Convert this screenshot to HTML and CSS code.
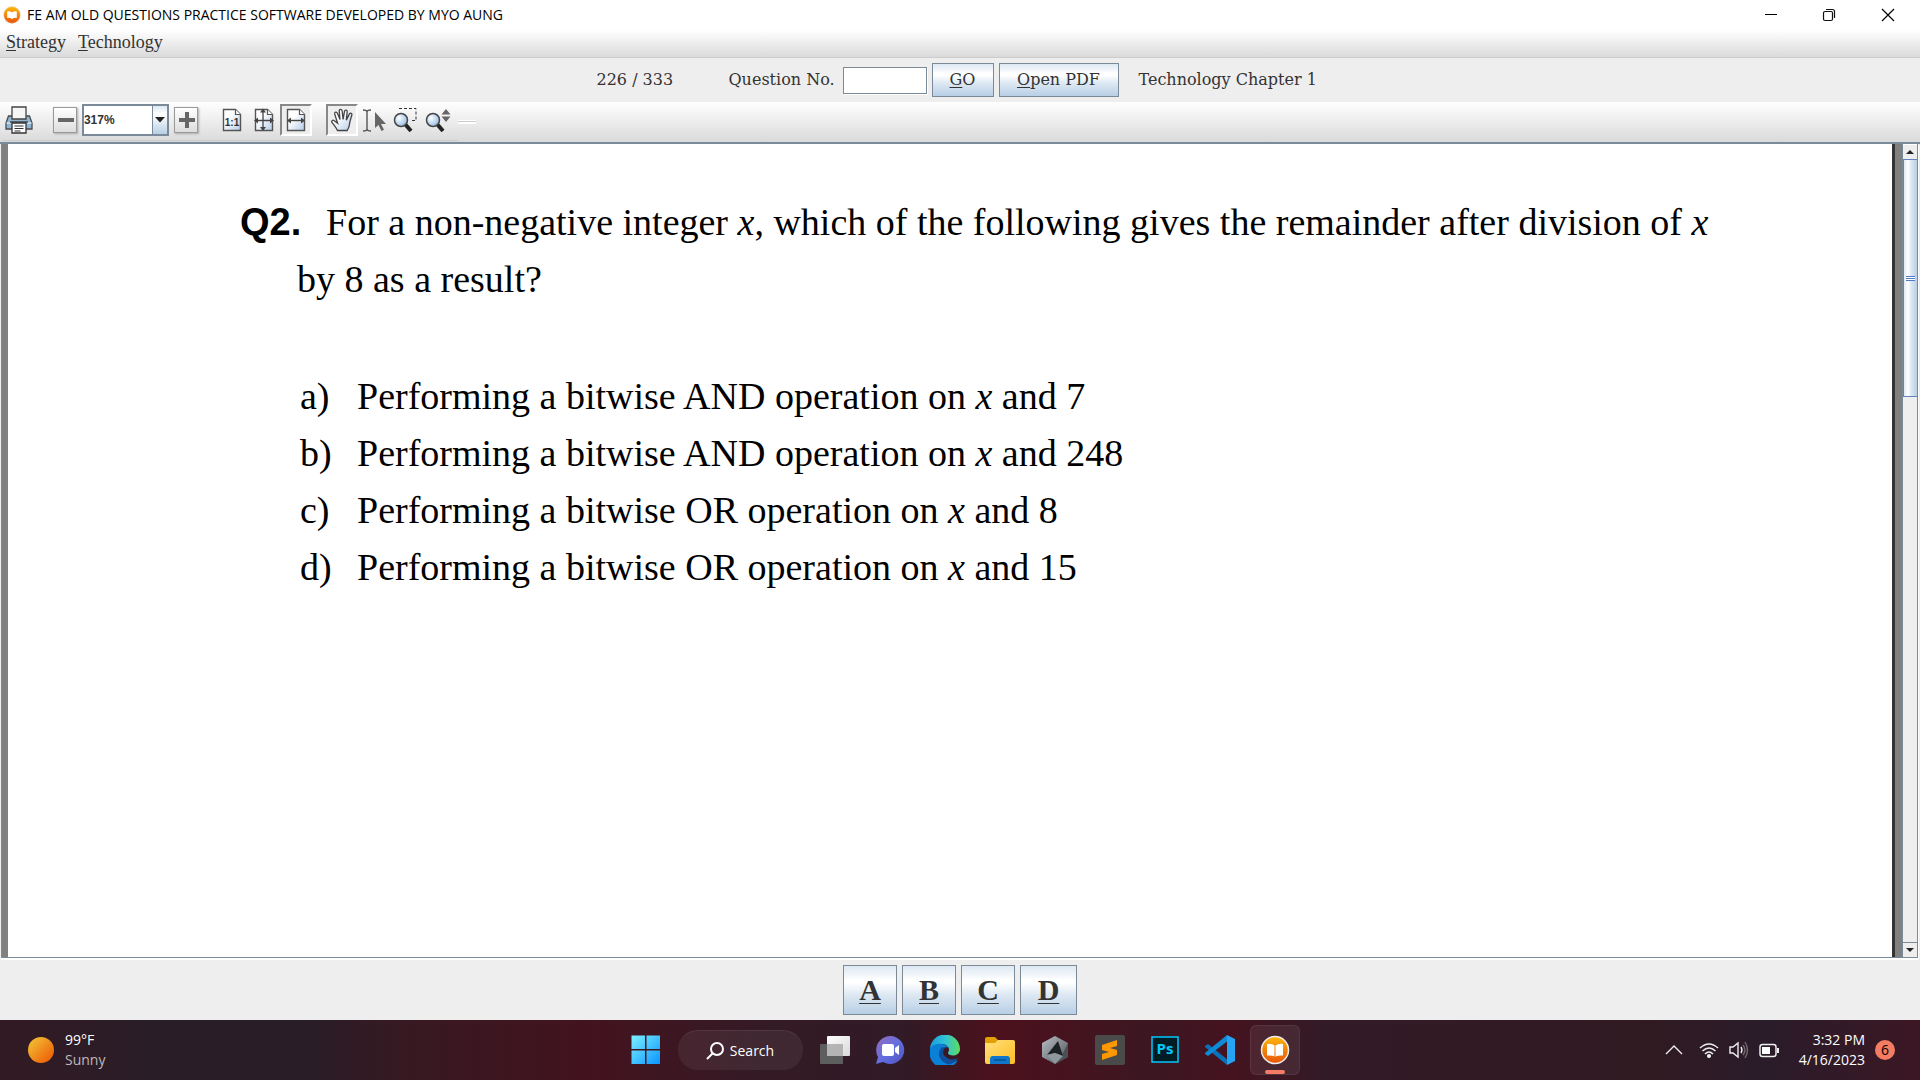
FILE: index.html
```html
<!DOCTYPE html>
<html lang="en">
<head>
<meta charset="utf-8">
<title>FE AM OLD QUESTIONS PRACTICE SOFTWARE DEVELOPED BY MYO AUNG</title>
<link rel="stylesheet" href="styles.css">
</head>
<body>
<svg class="defs" aria-hidden="true">
  <defs>
    <linearGradient id="paper" x1="0" y1="0" x2="1" y2="1"><stop offset=".35" stop-color="#fff"/><stop offset="1" stop-color="#b4cbe8"/></linearGradient>
    <radialGradient id="lens" cx=".35" cy=".35" r=".75"><stop offset="0" stop-color="#fff"/><stop offset="1" stop-color="#8db8e4"/></radialGradient>
    <linearGradient id="orange" x1="0" y1="0" x2="0" y2="1"><stop offset="0" stop-color="#ffb70a"/><stop offset="1" stop-color="#e85306"/></linearGradient>
    <linearGradient id="win" x1="0" y1="0" x2="1" y2="1"><stop offset="0" stop-color="#7cf0ff"/><stop offset="1" stop-color="#0a95ff"/></linearGradient>
    <linearGradient id="sun" x1="0" y1="0" x2="1" y2="1"><stop offset=".1" stop-color="#f2be34"/><stop offset=".8" stop-color="#ee6a0c"/></linearGradient>
    <linearGradient id="chat" x1="0" y1="0" x2="1" y2="1"><stop offset="0" stop-color="#9a68b8"/><stop offset=".5" stop-color="#6470e0"/><stop offset="1" stop-color="#5050c0"/></linearGradient>
    <linearGradient id="edge1" x1="0" y1=".5" x2="1" y2=".5"><stop offset="0" stop-color="#1c9bdc"/><stop offset=".5" stop-color="#2fc3d8"/><stop offset="1" stop-color="#5fdc5c"/></linearGradient>
    <linearGradient id="folder" x1="0" y1="0" x2="1" y2="1"><stop offset="0" stop-color="#ffe07a"/><stop offset="1" stop-color="#ffbd25"/></linearGradient>
    <linearGradient id="cube" x1="0" y1="0" x2="1" y2="1"><stop offset="0" stop-color="#b9c0c6"/><stop offset="1" stop-color="#4b5157"/></linearGradient>
    <linearGradient id="gray" x1="0" y1="0" x2="1" y2="1"><stop offset="0" stop-color="#fff"/><stop offset="1" stop-color="#d8d8d8"/></linearGradient>
  </defs>
</svg>

<div class="app">
  <header class="titlebar">
    <svg class="app-icon" viewBox="0 0 30 30" aria-hidden="true"><circle cx="15" cy="15" r="14" fill="url(#orange)" stroke="#e8e2dd"/><path d="M7 9q4-1 8 1.500Q19 8 23 9V20q-4-1-8 1.500Q11 19 7 20z" fill="#fff"/></svg>
    <h1 class="title">FE AM OLD QUESTIONS PRACTICE SOFTWARE DEVELOPED BY MYO AUNG</h1>
    <div class="window-controls">
      <button class="win-btn" aria-label="Minimize"><svg width="14" height="14" viewBox="0 0 14 14"><path d="M1 6.500h12" stroke="#000"/></svg></button>
      <button class="win-btn" aria-label="Restore"><svg width="14" height="14" viewBox="0 0 14 14" fill="none" stroke="#111" stroke-width="1.200"><rect x="1.500" y="3.500" width="9" height="9" rx="1.500"/><path d="M4 1.500h6.500q2 0 2 2V10"/></svg></button>
      <button class="win-btn" aria-label="Close"><svg width="14" height="14" viewBox="0 0 14 14"><path d="M1 1l12 12M13 1L1 13" stroke="#000" stroke-width="1.200"/></svg></button>
    </div>
  </header>

  <nav class="menubar">
    <a href="#strategy"><u>S</u>trategy</a>
    <a href="#technology"><u>T</u>echnology</a>
  </nav>

  <section class="question-bar">
    <span class="counter">226 / 333</span>
    <label for="qno">Question No.</label>
    <input id="qno" class="qno" type="text">
    <button class="metal-btn go"><u>G</u>O</button>
    <button class="metal-btn open-pdf"><u>O</u>pen PDF</button>
    <span class="chapter">Technology Chapter 1</span>
  </section>

  <div class="toolbar">
    <div class="tools">
      <button class="tool print" aria-label="Print"><svg width="30" height="30" viewBox="0 0 30 30"><path d="M4.500 11h21l2.500 7v6H2v-6z" fill="#8fb5d2" stroke="#474b50" stroke-width="1.300"/><path d="M8 2h14v12H8z" fill="#f6f6f6" stroke="#444" stroke-width="1.300"/><path d="M2.500 18h25" stroke="#d5e5f1" stroke-width="1.500"/><path d="M6 17h18" stroke="#444" stroke-width="1.500"/><path d="M8 18h14v10H8z" fill="#fff" stroke="#333" stroke-width="1.300"/><path d="M10.500 21h9M10.500 23.500h9M10.500 26h6" stroke="#333"/></svg></button>
      <button class="zoom-btn zoom-out" aria-label="Zoom out"><svg width="24" height="24" viewBox="0 0 24 24"><path d="M4 12h16" stroke="#666" stroke-width="4"/></svg></button>
      <div class="combo">
        <input class="combo-text" type="text" value="317%" aria-label="Zoom level">
        <button class="combo-arrow" aria-label="Choose zoom"><svg width="12" height="6" viewBox="0 0 12 6"><path d="M1 0h10L6 5.500z" fill="#222"/></svg></button>
      </div>
      <button class="zoom-btn" aria-label="Zoom in"><svg width="24" height="24" viewBox="0 0 24 24"><path d="M4 12h16M12 4v16" stroke="#666" stroke-width="4"/></svg></button>
      <div class="group">
        <button class="tool" aria-label="Actual size"><svg width="28" height="28" viewBox="0 0 28 28"><path d="M5.500 3.500h12l5 5v16h-17z" fill="url(#paper)" stroke="#555" stroke-width="1.400"/><path d="M17.500 3.500v5h5" fill="#fff" stroke="#555" stroke-width="1.200"/><text x="14" y="20" class="ratio">1:1</text></svg></button>
        <button class="tool" aria-label="Fit page"><svg width="28" height="28" viewBox="0 0 28 28"><path d="M5.500 3.500h12l5 5v16h-17z" fill="url(#paper)" stroke="#555" stroke-width="1.400"/><path d="M17.500 3.500v5h5" fill="#fff" stroke="#555" stroke-width="1.200"/><path d="M6 14.500h16M13 5v18" stroke="#444" stroke-width="1.300"/><path d="M4 14.500l4-3v6zM24 14.500l-4-3v6zM13 2.500l-3 4h6zM13 25l-3-4h6z" fill="#444"/></svg></button>
        <button class="tool pressed" aria-label="Fit width"><svg width="28" height="28" viewBox="0 0 28 28"><path d="M5.500 3.500h12l5 5v16h-17z" fill="url(#paper)" stroke="#555" stroke-width="1.400"/><path d="M17.500 3.500v5h5" fill="#fff" stroke="#555" stroke-width="1.200"/><path d="M8 14.500h12" stroke="#444" stroke-width="1.400"/><path d="M5 14.500l4-3v6zM23 14.500l-4-3v6z" fill="#444"/></svg></button>
      </div>
      <div class="group">
        <button class="tool pressed" aria-label="Pan"><svg width="28" height="28" viewBox="0 0 28 28"><path d="M9.500 24.500C8 21 5 18 3.800 16.200c-.8-1.500 1-2.700 2.500-1.500l3.300 2.600L6.700 8c-.5-2 2-2.600 2.700-.8l2.600 6.300-.8-8.700c0-2 2.700-2 2.900 0l1 8.500 1.400-8c.5-1.900 3-1.400 2.700.5l-.9 8.300 3-6c1-1.700 3.200-.7 2.500 1.100-1 3.300-2 5.500-2.300 9-.2 2.800-1.300 4.500-2.300 6.300z" fill="url(#paper)" stroke="#444" stroke-width="1.300"/></svg></button>
        <button class="tool" aria-label="Select text"><svg width="28" height="28" viewBox="0 0 28 28"><path d="M3 4q4 0 4 2 0-2 4-2M7 6v17M3 25q4 0 4-2 0 2 4 2" fill="none" stroke="#555" stroke-width="1.400"/><path d="M15 6v16l3.500-3 3 6 2.500-1.300-3-5.700h5z" fill="#666"/></svg></button>
        <button class="tool" aria-label="Zoom to selection"><svg width="28" height="28" viewBox="0 0 28 28"><path d="M7 2.500h17v12h-6" fill="none" stroke="#333" stroke-dasharray="3 2"/><path d="M13 18l6 7" stroke="#222" stroke-width="4"/><circle cx="9" cy="14" r="6.500" fill="url(#lens)" stroke="#444" stroke-width="1.500"/></svg></button>
        <button class="tool" aria-label="Dynamic zoom"><svg width="28" height="28" viewBox="0 0 28 28"><path d="M13 18l6 7" stroke="#222" stroke-width="4"/><circle cx="9" cy="14" r="6.500" fill="url(#lens)" stroke="#444" stroke-width="1.500"/><path d="M17.500 8.500L22 3l4.500 5.500zM17.500 10.500h9L22 16z" fill="#666"/></svg></button>
      </div>
    </div>
    <div class="handle"></div>
  </div>

  <main class="viewer">
    <article class="page">
      <p class="question"><b class="qnum">Q2.</b>For a non-negative integer <i>x</i>, which of the following gives the remainder after division of <i>x</i><br>by 8 as a result?</p>
      <ol class="choices">
        <li><span>a)</span>Performing a bitwise AND operation on <i>x</i> and 7</li>
        <li><span>b)</span>Performing a bitwise AND operation on <i>x</i> and 248</li>
        <li><span>c)</span>Performing a bitwise OR operation on <i>x</i> and 8</li>
        <li><span>d)</span>Performing a bitwise OR operation on <i>x</i> and 15</li>
      </ol>
    </article>
    <div class="scrollbar">
      <button class="scroll-btn" aria-label="Scroll up"><svg width="8" height="4" viewBox="0 0 8 4"><path d="M0 4l4-4 4 4z" fill="#222"/></svg></button>
      <div class="track"><div class="thumb"><span class="grip"></span></div></div>
      <button class="scroll-btn down" aria-label="Scroll down"><svg width="8" height="4" viewBox="0 0 8 4"><path d="M0 0l4 4 4-4z" fill="#222"/></svg></button>
    </div>
  </main>

  <section class="answers">
    <button class="metal-btn answer">A</button>
    <button class="metal-btn answer">B</button>
    <button class="metal-btn answer">C</button>
    <button class="metal-btn answer">D</button>
  </section>
</div>

<footer class="taskbar">
  <div class="weather">
    <svg width="26" height="26" viewBox="0 0 26 26" aria-hidden="true"><circle cx="13" cy="13" r="13" fill="url(#sun)"/></svg>
    <div><div>99°F</div><div class="muted">Sunny</div></div>
  </div>
  <div class="dock">
    <button class="dock-btn" aria-label="Start"><svg width="30" height="30" viewBox="0 0 30 30"><path d="M.500.500H14V14H.500zM15.500.500H29V14H15.500zM.500 15.500H14V29H.500zM15.500 15.500H29V29H15.500z" fill="url(#win)"/></svg></button>
    <button class="search"><svg width="18" height="18" viewBox="0 0 18 18" fill="none" stroke="#fff" stroke-width="2"><circle cx="11" cy="7" r="6"/><path d="M7 11l-6 6"/></svg>Search</button>
    <button class="dock-btn" aria-label="Task view"><svg width="30" height="30" viewBox="0 0 30 30"><rect y="9" width="23" height="20" rx="1" fill="#5e5e5e"/><rect x="7" y="1" width="23" height="20" rx="1" fill="url(#gray)"/><path d="M7 9h16v12H7z" fill="#b4b4b4"/></svg></button>
    <button class="dock-btn" aria-label="Chat"><svg width="30" height="30" viewBox="0 0 30 30"><path d="M15 1a14 14 0 1 1-7 26l-7 2 2-7A14 14 0 0 1 15 1z" fill="url(#chat)"/><rect x="7" y="9" width="12" height="12" rx="2" fill="#fff"/><path d="M20 13l4-3v10l-4-3z" fill="#fff"/></svg></button>
    <button class="dock-btn" aria-label="Edge"><svg width="30" height="30" viewBox="0 0 30 30"><path d="M0 15A15 15 0 0 1 30 14c0 4-3 6.500-7 6.500-3 0-5-1-5-2.500 0-1 1-1.500 1-3.500 0-3-3-5.500-7-5.500-6 0-10 3-12 6z" fill="url(#edge1)"/><path d="M0 15C1 10 7 8 12 9c3 .5 6 2 7 4-4-2-9 1-8 6 1 5 6 8 11 8 2 0 4-.5 6-2A15 15 0 0 1 0 15z" fill="#0a80d6"/><path d="M12 12c-3 3-4 7-2 11s6 6 9 6.500c4-1 7-3 9-6.500-4 2-9 2-12-1-3-2-4-6-1-9z" fill="#0c509e"/></svg></button>
    <button class="dock-btn" aria-label="File Explorer"><svg width="30" height="30" viewBox="0 0 30 30"><path d="M0 4q0-2 2-2h8l4 4h14q2 0 2 2v5H0z" fill="#e2a008"/><path d="M0 8h10l3-3h15q2 0 2 2v20q0 2-2 2H2q-2 0-2-2z" fill="url(#folder)"/><path d="M5 29v-5q0-3 3-3h14q3 0 3 3v5z" fill="#0f76cc"/><path d="M9 25h12" stroke="#07508e" stroke-width="1.500"/></svg></button>
    <button class="dock-btn" aria-label="3D cube"><svg width="30" height="30" viewBox="0 0 30 30"><path d="M15 1l13 7v14l-13 7-13-7V8z" fill="url(#cube)"/><path d="M28 8v14l-13 7 7-9z" fill="#4a5056"/><path d="M7 20L18 6l5 15-8-3z" fill="#1d2125"/><path d="M7 20l8-2 8 3-8 8z" fill="#8f979e"/></svg></button>
    <button class="dock-btn" aria-label="Sublime Text"><svg width="30" height="30" viewBox="0 0 30 30"><rect width="30" height="30" rx="2" fill="#4a4a4a"/><path d="M7 10l15-5v6l-7 2 7 2v5L7 25v-6l7-2-7-2z" fill="#ff9800"/></svg></button>
    <button class="dock-btn" aria-label="Photoshop"><svg width="30" height="30" viewBox="0 0 30 30"><rect x="2" y="2" width="26" height="25" fill="#001d26" stroke="#00c8ff" stroke-width="1.500"/><text x="15" y="19" class="ps">Ps</text></svg></button>
    <button class="dock-btn" aria-label="Visual Studio Code"><svg width="30" height="30" viewBox="0 0 30 30"><path d="M0 11l3-2 20 16-1 5L0 12z" fill="#0a70b8"/><path d="M0 19l3 2L24 5 22 0 0 18z" fill="#0f8ad6"/><path d="M22 0l8 4v22l-8 4z" fill="#25a3f4"/></svg></button>
    <button class="dock-btn active" aria-label="Practice software"><svg width="30" height="30" viewBox="0 0 30 30"><circle cx="15" cy="15" r="13.500" fill="url(#orange)" stroke="#eee" stroke-width="1.500"/><path d="M7 9q4-1 7.500 1.500V21.500Q11 20 7 20.500zM23 9q-4-1-7.500 1.500V21.500Q19 20 23 20.500z" fill="#fff"/></svg></button>
  </div>
  <div class="tray">
    <svg width="18" height="20" viewBox="0 0 18 20" fill="none" stroke="#eee" stroke-width="1.400"><path d="M1 14l8-8 8 8"/></svg>
    <svg class="wifi" width="20" height="20" viewBox="0 0 20 20" fill="none" stroke="#eee" stroke-width="1.500"><path d="M1 8q9-8 18 0M3.500 11q6.500-6 13 0M6 14q4-4 8 0"/><circle cx="10" cy="16" r="1.300" fill="#fff"/></svg>
    <svg width="20" height="20" viewBox="0 0 20 20" fill="none" stroke="#eee" stroke-width="1.400"><path d="M1 7h3l5-4v14l-5-4H1z"/><path d="M12 7q2 3 0 6"/><path d="M14 5q4 5 0 10M16 2q5 8 0 16" stroke="#75686f"/></svg>
    <svg width="20" height="20" viewBox="0 0 20 20"><rect x="1" y="4.500" width="16" height="12" rx="2.500" fill="none" stroke="#eee" stroke-width="1.500"/><rect x="3" y="7" width="8" height="7" fill="#fff"/><path d="M18 8h2v5h-2z" fill="#eee"/></svg>
    <div class="clock"><div>3:32 PM</div><div>4/16/2023</div></div>
    <span class="badge">6</span>
  </div>
</footer>
</body>
</html>
```
FILE: styles.css
```css
* { box-sizing: border-box; }

body {
  margin: 0;
  min-height: 100vh;
  display: flex;
  flex-direction: column;
  background: #eee;
  color: #333;
  font-family: "Open Sans", sans-serif;
}

button, input { font: inherit; color: inherit; border: 0; padding: 0; margin: 0; background: none; border-radius: 0; }
svg { display: block; flex: none; }
.defs { position: absolute; width: 0; height: 0; }

.app { flex: 1; display: flex; flex-direction: column; }

/* Title bar */
.titlebar { display: flex; align-items: center; height: 30px; padding-left: 3px; background: #fff; color: #000; }
.app-icon { width: 18px; height: 18px; }
.title { margin: 0 0 0 6px; flex: 1; font-size: 14px; font-weight: 400; line-height: 20px; }
.window-controls { display: flex; }
.win-btn { width: 58px; height: 28px; display: grid; place-items: center; }
.win-btn:last-child { width: 60px; margin-right: 2px; }

/* Menu bar */
.menubar {
  display: flex;
  gap: 12px;
  height: 28px;
  padding: 0 6px;
  border-bottom: 1px solid #ccc;
  background: linear-gradient(#fff, #dadada);
  font: 18px/24px "Liberation Serif", serif;
}
.menubar a { color: #333; text-decoration: none; }

/* Question navigation */
.question-bar {
  display: flex;
  justify-content: center;
  align-items: center;
  gap: 5px;
  height: 44px;
  font: 16px/24px "DejaVu Serif", serif;
}
.counter { width: 127px; }
.question-bar label { width: 109px; white-space: nowrap; }
.qno { width: 84px; height: 27px; padding: 0 4px; border: 1px solid #7a8a99; background: #fff; box-shadow: 1px 1px #fff; }
.metal-btn {
  border: 1px solid #7a8a99;
  background: linear-gradient(#dde8f3, #fff 30%, #fff 35%, #dde8f3 60%, #b8cfe5);
}
.go { width: 62px; height: 34px; }
.open-pdf { width: 120px; height: 34px; }
.chapter { width: 185px; margin-left: 15px; white-space: nowrap; }

/* Viewer toolbar */
.toolbar {
  display: flex;
  align-items: center;
  height: 42px;
  padding-left: 2px;
  border-bottom: 2px solid #7a8a99;
  background: linear-gradient(#fff, #dadada);
}
.tools { display: flex; align-items: center; height: 38px; width: 456px; padding: 0 4px 3px 2px; border-bottom: 1px solid #ccc; }
.group { display: flex; }
.group + .group { margin-left: 14px; }
.tool { width: 32px; height: 32px; display: grid; place-items: center; }
.tool.pressed { border: 2px solid #fff; border-top-color: #888; border-left-color: #888; background: #eee; }
.zoom-btn { width: 24px; height: 26px; display: grid; place-items: center; border: 1px solid #999; background: linear-gradient(#fff, #ddd); box-shadow: 1px 1px 2px #aaa; }
.zoom-out { margin-left: 18px; }
.combo { display: flex; width: 90px; height: 32px; margin: 0 5px; border: 2px solid #7a8a99; background: #fff; }
.combo-text { width: 68px; font: bold 12px/16px "Liberation Sans", sans-serif; }
.combo-arrow { flex: 1; display: grid; place-items: center; border-left: 1px solid #7a8a99; background: linear-gradient(#dde8f3, #fff 30%, #b8cfe5); }
.combo + .zoom-btn { margin-right: 18px; }
.ratio { font: bold 10px "Liberation Sans", sans-serif; fill: #333; text-anchor: middle; }
.handle { width: 18px; height: 4px; border-top: 1px solid #fff; border-bottom: 2px solid #fff; background: #ccc; }

/* Document viewer */
.viewer {
  flex: 1;
  display: flex;
  margin: 0 2px 2px 1px;
  border: 1px solid #7a8a99;
  border-top: 0;
  background: #808080;
  box-shadow: 1px 1px #fff, 0 2px #fff;
}
.page {
  flex: 1;
  margin: 0 7px 0 6px;
  padding: 50px 0 50px 232px;
  border-right: 3px solid #333;
  background: #fff;
  color: #000;
  font: 38px/57px "Liberation Serif", serif;
}
.question { margin: 0; padding-left: 57px; text-indent: -57px; white-space: nowrap; }
.qnum { display: inline-block; width: 86px; text-indent: 0; font-family: "Liberation Sans", sans-serif; }
.choices { margin: 60px 0 0 60px; padding: 0; list-style: none; }
.choices span { display: inline-block; width: 57px; }

.scrollbar { display: flex; flex-direction: column; width: 15px; border-left: 1px solid #7a8a99; background: #eee; }
.scroll-btn { height: 15px; display: grid; place-items: center; border-top: 1px solid #fff; background: #eee; }
.scroll-btn.down { border-top: 1px solid #7a8a99; }
.track { flex: 1; }
.thumb { height: 30%; min-height: 238px; display: grid; place-items: center; border: 1px solid #6382bf; border-right: 0; background: linear-gradient(90deg, #dde8f3, #fff 30%, #dde8f3 55%, #b8cfe5); }
.grip { width: 9px; height: 5px; border-top: 1px solid #5078c8; border-bottom: 1px solid #5078c8; background: linear-gradient(#fff 1px, #5078c8 1px, #5078c8 2px, #fff 2px); }

/* Answer buttons */
.answers { display: flex; justify-content: center; align-items: center; gap: 5px; height: 60px; }
.answer { width: 54px; height: 50px; font: bold 30px/36px "Liberation Serif", serif; text-decoration: underline; text-decoration-thickness: 1px; text-underline-offset: 3px; }
.answer:last-child { width: 57px; }
.menubar u, .question-bar u { text-decoration-thickness: 1px; text-underline-offset: 2px; }

/* Taskbar */
.taskbar {
  display: grid;
  grid-template-columns: 1fr auto 1fr;
  align-items: center;
  height: 60px;
  color: #fff;
  font-size: 14px;
  line-height: 20px;
  background: linear-gradient(90deg, #321a24, #291d27 8%, #291d27 16%, #371922 21%, #43131f 31%, #351a25 39%, #301b26 47%, #4c111c 52%, #3c1722 60%, #451320 64%, #321b26 69%, #301a22 86%, #2a1c2a 92%, #3c1724);
}
.weather { display: flex; align-items: center; gap: 11px; padding-left: 28px; }
.muted { color: #bfb8bc; }
.dock { display: flex; align-items: center; gap: 5px; }
.dock-btn { width: 50px; height: 50px; display: grid; place-items: center; border-radius: 6px; }
.dock-btn.active { position: relative; background: #ffffff12; border: 1px solid #ffffff12; }
.dock-btn.active::after { content: ""; position: absolute; bottom: 0; left: 14px; width: 20px; height: 4px; border-radius: 2px; background: #f47c62; }
.search { width: 125px; height: 40px; margin: 0 2px; display: flex; align-items: center; justify-content: center; gap: 6px; border-radius: 20px; background: #ffffff10; border-top: 1px solid #ffffff14; }
.ps { font: bold 15px "Open Sans", sans-serif; fill: #00c8ff; text-anchor: middle; }
.tray { display: flex; align-items: center; justify-content: flex-end; gap: 10px; padding-right: 25px; }
.wifi { margin-left: 6px; }
.clock { width: 76px; text-align: right; white-space: nowrap; }
.badge { width: 20px; height: 20px; border-radius: 50%; background: #f47c62; color: #000; text-align: center; font-size: 14px; }
```
